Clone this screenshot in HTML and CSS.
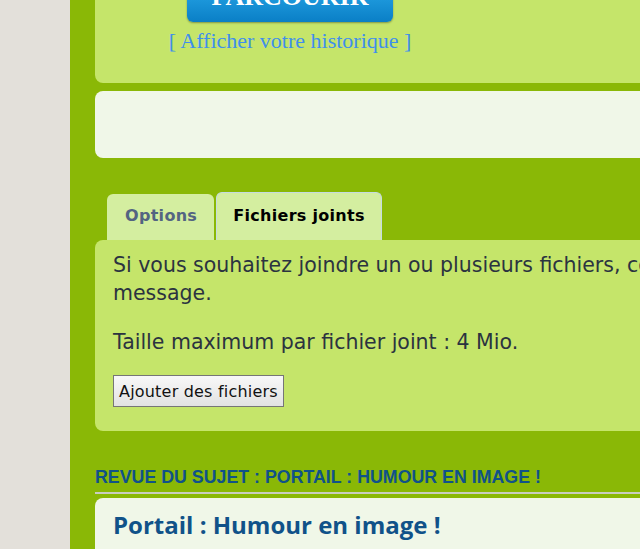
FILE: index.html
```html
<!DOCTYPE html>
<html lang="fr">
<head>
    <meta charset="UTF-8">
    <meta name="viewport" content="width=device-width, initial-scale=1.0">
    <title>Répondre - Portail : Humour en image !</title>
    <link rel="stylesheet" href="styles.css">
</head>
<body>

    <div class="page">
        <div class="side"></div>

        <div class="main">
            <div class="panel browse-panel">
                <div class="browse">
                    <a href="#" class="btn-browse">PARCOURIR</a>
                    <a href="#" class="history">[ Afficher votre historique ]</a>
                </div>
            </div>

            <div class="panel-light empty-panel"></div>

            <ul class="tabs">
                <li class="tab"><a href="#">Options</a></li>
                <li class="tab active"><a href="#">Fichiers joints</a></li>
            </ul>
            <div class="tab-body">
                <p>Si vous souhaitez joindre un ou plusieurs fichiers, complétez les champs suivants et envoyez votre<br>message.</p>
                <p class="max-size">Taille maximum par fichier joint : 4 Mio.</p>
                <button type="button" class="add-files">Ajouter des fichiers</button>
            </div>

            <h3 class="review">REVUE DU SUJET : PORTAIL : HUMOUR EN IMAGE !</h3>
            <div class="panel-light post">
                <h2>Portail : Humour en image !</h2>
            </div>
        </div>
    </div>

</body>
</html>
```

FILE: styles.css
```css
html, body {
    margin: 0;
    padding: 0;
    overflow: hidden;
}

body {
    font-family: "DejaVu Sans", Verdana, sans-serif;
    background-color: #e3e0da;
    color: #2b3340;
}

.page {
    display: flex;
    min-height: 100vh;
}

.side {
    width: 70px;
    flex-shrink: 0;
    background-color: #e3e0da;
}

.main {
    flex: 1;
    background-color: #8ab806;
    padding-left: 25px;
    overflow: hidden;
}

.panel {
    background-color: #c5e56a;
    border-radius: 8px;
    margin-right: -20px;
}

.panel-light {
    background-color: #f0f7e8;
    border-radius: 8px;
    margin-right: -20px;
}

/* bloc parcourir */
.browse-panel {
    margin-top: -40px;
    padding: 22px 0 30px 0;
}

.browse {
    width: 390px;
    display: flex;
    flex-direction: column;
    align-items: center;
}

.btn-browse {
    display: block;
    width: 206px;
    height: 30px;
    padding-bottom: 10px;
    line-height: 30px;
    text-align: center;
    font-family: "Liberation Serif", "Times New Roman", serif;
    font-size: 26px;
    font-weight: bold;
    color: #fff;
    text-decoration: none;
    background: linear-gradient(#2aa9ea, #0a7fc6);
    border-radius: 6px;
    box-shadow: 0 1px 2px rgba(0, 0, 0, 0.35);
}

.history {
    display: block;
    margin-top: 7px;
    line-height: 24px;
    font-family: "Liberation Serif", "Times New Roman", serif;
    font-size: 22px;
    color: #3f8fec;
    text-decoration: none;
}

.empty-panel {
    margin-top: 8px;
    height: 67px;
}

/* onglets */
.tabs {
    list-style: none;
    margin: 34px 0 0 0;
    padding: 0 0 0 12px;
    display: flex;
    align-items: flex-end;
    gap: 2px;
}

.tab {
    background-color: #d4eea0;
    border-radius: 6px 6px 0 0;
}

.tab a {
    display: block;
    height: 20px;
    padding: 12px 17px 14px 18px;
    line-height: 20px;
    font-size: 16px;
    letter-spacing: 0.3px;
    font-weight: bold;
    color: #536482;
    text-decoration: none;
}

.tab.active {
    border: 1px solid #c6dbe2;
    border-bottom: none;
}

.tab.active a {
    padding: 13px 16px 14px 16px;
    color: #000;
}

.tab-body {
    background-color: #c5e56a;
    border-radius: 8px;
    margin-right: -20px;
    padding: 11px 18px 24px 18px;
    white-space: nowrap;
    overflow: hidden;
}

.tab-body p {
    margin: 0 0 21px 0;
    font-size: 20.5px;
    line-height: 28px;
}

.tab-body .max-size {
    margin-bottom: 0;
}

.add-files {
    display: block;
    height: 32px;
    margin-top: 19px;
    padding: 0 5px;
    font-family: "DejaVu Sans", Verdana, sans-serif;
    font-size: 16px;
    letter-spacing: 0.2px;
    color: #111;
    background: linear-gradient(#f8f8f8, #e2e2e2);
    border: 1px solid #767676;
    border-radius: 0;
}

/* revue du sujet */
.review {
    margin: 36px -20px 0 0;
    padding-bottom: 5px;
    border-bottom: 2px solid #c9cdc0;
    font-family: "Liberation Sans", Arial, sans-serif;
    font-size: 17.8px;
    line-height: 20px;
    font-weight: bold;
    color: #105289;
}

.post {
    margin-top: 4px;
    height: 80px;
    padding: 12px 18px 0 18px;
}

.post h2 {
    margin: 0;
    font-family: "Open Sans", "DejaVu Sans", sans-serif;
    font-size: 24px;
    line-height: 30px;
    font-weight: bold;
    color: #105289;
}
```
